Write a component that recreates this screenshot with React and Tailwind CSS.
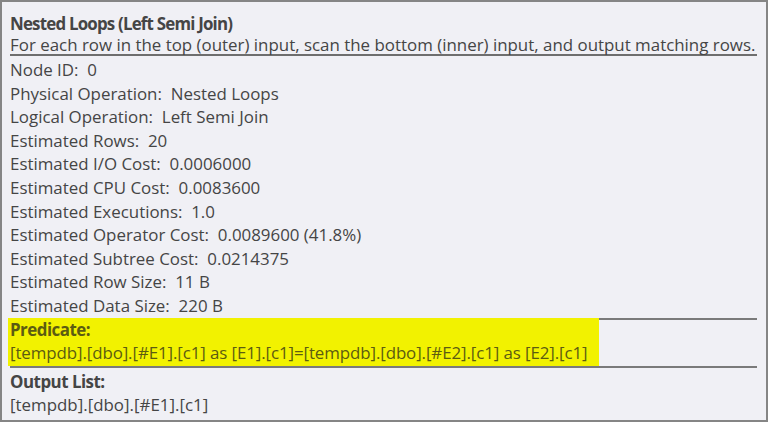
export default function App() {
  const rows = [
    ["Node ID", "0"],
    ["Physical Operation", "Nested Loops"],
    ["Logical Operation", "Left Semi Join"],
    ["Estimated Rows", "20"],
    ["Estimated I/O Cost", "0.0006000"],
    ["Estimated CPU Cost", "0.0083600"],
    ["Estimated Executions", "1.0"],
    ["Estimated Operator Cost", "0.0089600 (41.8%)"],
    ["Estimated Subtree Cost", "0.0214375"],
    ["Estimated Row Size", "11 B"],
    ["Estimated Data Size", "220 B"],
  ];

  return (
    <div
      className="w-[768px] h-[422px] bg-[#f0f0f5] border-2 border-[#858585] text-[#454545] text-[16.9px] overflow-hidden"
      style={{ fontFamily: '"Open Sans", "Noto Sans", sans-serif' }}
    >
      <div className="pl-[8px] pt-[10px] w-[755px]">
        {/* Header */}
        <div className="font-bold leading-[24px] tracking-[-0.8px]">Nested Loops (Left Semi Join)</div>
        <div className="leading-[18px] whitespace-nowrap border-b-2 border-[#6e6e6e]">
          For each row in the top (outer) input, scan the bottom (inner) input, and output matching rows.
        </div>

        {/* Properties */}
        <div className="pt-[2px] leading-[23.6px]">
          {rows.map(([k, v]) => (
            <div key={k} className="whitespace-pre">
              {k}:  {v}
            </div>
          ))}
        </div>

        {/* Predicate */}
        <div className="border-t-2 border-b-2 border-[#7a7a7a]">
          <div className="bg-[#f2f200] w-[591px] -ml-[2px] pl-[2px] text-[#5c5c12] pb-[2px] leading-[23px]">
            <div className="font-bold tracking-[-0.5px] -mt-[2px]">Predicate:</div>
            <div className="whitespace-nowrap tracking-[-0.1px]">
              [tempdb].[dbo].[#E1].[c1] as [E1].[c1]=[tempdb].[dbo].[#E2].[c1] as [E2].[c1]
            </div>
          </div>
        </div>

        {/* Output list */}
        <div className="font-bold leading-[20px] tracking-[-0.5px] pt-[4px]">Output List:</div>
        <div className="leading-[24px] mt-[1px]">[tempdb].[dbo].[#E1].[c1]</div>
      </div>
    </div>
  );
}
